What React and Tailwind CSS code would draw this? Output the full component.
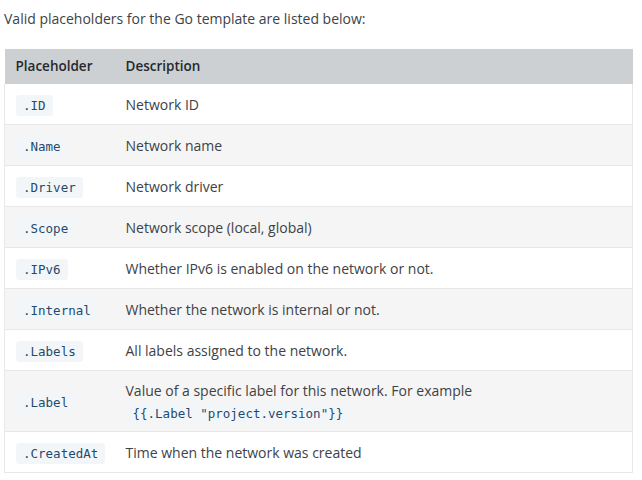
import React from 'react'

const rows = [
  { key: '.ID', desc: 'Network ID' },
  { key: '.Name', desc: 'Network name' },
  { key: '.Driver', desc: 'Network driver' },
  { key: '.Scope', desc: 'Network scope (local, global)' },
  { key: '.IPv6', desc: 'Whether IPv6 is enabled on the network or not.' },
  { key: '.Internal', desc: 'Whether the network is internal or not.' },
  { key: '.Labels', desc: 'All labels assigned to the network.' },
  {
    key: '.Label',
    desc: 'Value of a specific label for this network. For example',
    code: '{{.Label "project.version"}}',
  },
  { key: '.CreatedAt', desc: 'Time when the network was created' },
]

function Code({ children }) {
  return (
    <code className="rounded-[3px] bg-[#f3f6f9] px-[7px] py-[3px] font-['DejaVu_Sans_Mono',monospace] text-[12.5px] leading-none text-[#1f4a6e]">
      {children}
    </code>
  )
}

export default function App() {
  return (
    <div className="min-h-[480px] bg-white px-[4px] pt-[8px] font-['Open_Sans',sans-serif] text-[14px] leading-[21px] text-[#3d4247]">
      <p className="mb-[20px]">Valid placeholders for the Go template are listed below:</p>
      <table className="w-[629px] table-fixed border-collapse">
        <thead>
          <tr className="bg-[#ccd0d3] text-left text-[#25292d]">
            <th className="w-[109px] pl-[11px] pr-[8px] py-[7px] text-[13.5px] font-semibold">Placeholder</th>
            <th className="px-[12px] py-[7px] text-[13.5px] font-semibold">Description</th>
          </tr>
        </thead>
        <tbody>
          {rows.map((row, index) => (
            <tr
              key={row.key}
              className={`border-x border-b border-[#e8e8e8] ${index % 2 === 0 ? 'bg-white' : 'bg-[#f5f5f5]'}`}
            >
              <td className="pl-[11px] pr-[4px] pt-[10px] pb-[9px] align-middle">
                <Code>{row.key}</Code>
              </td>
              <td className={`px-[12px] align-middle ${row.code ? 'pt-[9px] pb-[8px]' : 'pt-[10px] pb-[9px]'}`}>
                {row.desc}
                {row.code && (
                  <div className="mt-[1px]">
                    <Code>{row.code}</Code>
                  </div>
                )}
              </td>
            </tr>
          ))}
        </tbody>
      </table>
    </div>
  )
}
